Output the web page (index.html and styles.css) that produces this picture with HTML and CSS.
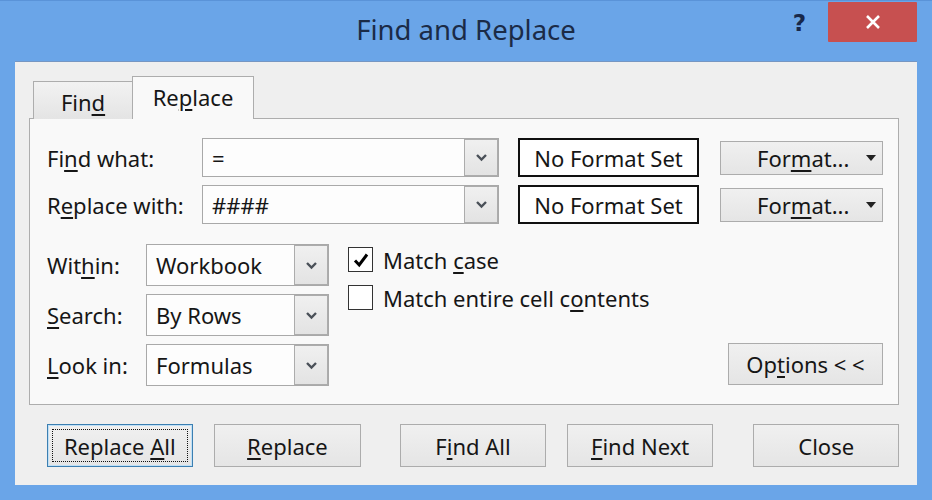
FILE: index.html
```html
<!DOCTYPE html>
<html>
<head>
<meta charset="utf-8">
<link rel="stylesheet" href="styles.css">
</head>
<body>
<div class="window">
  <div class="titlebar">
    <div class="title">Find and Replace</div>
    <div class="controls">
      <span class="help">?</span>
      <div class="close-btn">
        <svg width="16" height="16" viewBox="0 0 16 16"><path d="M2 2 L14 14 M14 2 L2 14" stroke="#fff" stroke-width="2.6" fill="none"/></svg>
      </div>
    </div>
  </div>
  <div class="client">
    <div class="tabs">
      <div class="tab"><span>Fin<u>d</u></span></div>
      <div class="tab active"><span>Re<u>p</u>lace</span></div>
    </div>
    <div class="panel">
      <div class="row">
        <div class="label">Fi<u>n</u>d what:</div>
        <div class="combo wide">
          <span class="value">=</span>
          <span class="drop"><svg width="13" height="9" viewBox="0 0 13 9"><path d="M2 2 L6.5 6.5 L11 2" stroke="#4a5058" stroke-width="2.4" fill="none"/></svg></span>
        </div>
        <div class="nofmt">No Format Set</div>
        <div class="btn fmt"><span>For<u>m</u>at...</span><span class="caret"></span></div>
      </div>
      <div class="row">
        <div class="label">R<u>e</u>place with:</div>
        <div class="combo wide">
          <span class="value">####</span>
          <span class="drop"><svg width="13" height="9" viewBox="0 0 13 9"><path d="M2 2 L6.5 6.5 L11 2" stroke="#4a5058" stroke-width="2.4" fill="none"/></svg></span>
        </div>
        <div class="nofmt">No Format Set</div>
        <div class="btn fmt"><span>For<u>m</u>at...</span><span class="caret"></span></div>
      </div>
      <div class="lower">
        <div class="opts">
          <div class="label2">Wit<u>h</u>in:</div>
          <div class="combo small">
            <span class="value">Workbook</span>
            <span class="drop"><svg width="13" height="9" viewBox="0 0 13 9"><path d="M2 2 L6.5 6.5 L11 2" stroke="#4a5058" stroke-width="2.4" fill="none"/></svg></span>
          </div>
          <div class="label2"><u>S</u>earch:</div>
          <div class="combo small">
            <span class="value">By Rows</span>
            <span class="drop"><svg width="13" height="9" viewBox="0 0 13 9"><path d="M2 2 L6.5 6.5 L11 2" stroke="#4a5058" stroke-width="2.4" fill="none"/></svg></span>
          </div>
          <div class="label2"><u>L</u>ook in:</div>
          <div class="combo small">
            <span class="value">Formulas</span>
            <span class="drop"><svg width="13" height="9" viewBox="0 0 13 9"><path d="M2 2 L6.5 6.5 L11 2" stroke="#4a5058" stroke-width="2.4" fill="none"/></svg></span>
          </div>
        </div>
        <div class="checks">
          <div class="check">
            <span class="box"><svg width="20" height="20" viewBox="0 0 20 20"><path d="M4 10.5 L8.2 15 L16 4.5" stroke="#000" stroke-width="3" fill="none"/></svg></span>
            <span>Match <u>c</u>ase</span>
          </div>
          <div class="check">
            <span class="box"></span>
            <span>Match entire cell c<u>o</u>ntents</span>
          </div>
        </div>
        <div class="btn options"><span>Op<u>t</u>ions &lt; &lt;</span></div>
      </div>
    </div>
    <div class="actions">
      <div class="btn act default"><span class="focus"><span>Replace <u>A</u>ll</span></span></div>
      <div class="btn act w148 g21"><span><u>R</u>eplace</span></div>
      <div class="btn act g39"><span>F<u>i</u>nd All</span></div>
      <div class="btn act w147 g21"><span><u>F</u>ind Next</span></div>
      <div class="btn act g40"><span>Close</span></div>
    </div>
  </div>
</div>
</body>
</html>
```

FILE: styles.css
```css
* { box-sizing: border-box; }
html, body { margin: 0; padding: 0; }
body {
  width: 932px;
  height: 500px;
  overflow: hidden;
  font-family: "Segoe UI", "Noto Sans", sans-serif;
  font-size: 22px;
  color: #161616;
}
u { text-decoration-thickness: 2px; text-underline-offset: 3px; }

.window {
  width: 932px;
  height: 500px;
  background: #6aa5e8;
  border-top: 1px solid #5a93d8;
  display: flex;
  flex-direction: column;
}

.titlebar {
  height: 60px;
  display: grid;
  grid-template-columns: 1fr auto 1fr;
  align-items: start;
  padding: 0 15px;
}
.title {
  grid-column: 2;
  align-self: center;
  font-size: 27.5px;
  color: #1b2b47;
  line-height: 1;
  padding-bottom: 2px;
}
.controls {
  grid-column: 3;
  justify-self: end;
  display: flex;
  align-items: flex-start;
  margin-top: 1px;
}
.help {
  font-weight: bold;
  font-size: 23px;
  color: #18284a;
  line-height: 1;
  margin-top: 10px;
  margin-right: 22px;
  font-family: "DejaVu Sans", sans-serif;
}
.close-btn {
  width: 89px;
  height: 40px;
  background: #c75050;
  display: flex;
  align-items: center;
  justify-content: center;
  border-radius: 1px;
}

.client {
  margin: 0 15px 15px 15px;
  height: 424px;
  background: #efefef;
  border-top: 1px solid #7696c2;
  padding: 14px 18px 0 14px;
}

.tabs {
  display: flex;
  align-items: flex-end;
  margin-left: 4px;
  height: 43px;
  margin-bottom: -1px;
}
.tab {
  position: relative;
  z-index: 1;
  height: 38px;
  width: 100px;
  border: 1px solid #adadad;
  border-bottom: none;
  background: linear-gradient(#f2f2f2, #e4e4e4);
  display: flex;
  align-items: center;
  justify-content: center;
  padding-top: 2px;
}
.tab.active {
  width: 122px;
  height: 43px;
  background: #f9f9f9;
  margin-left: -1px;
  padding-top: 0;
  padding-bottom: 3px;
}

.panel {
  height: 287px;
  border: 1px solid #adadad;
  background: #f9f9f9;
  padding: 19px 15px 18px 17px;
}

.row {
  display: flex;
  align-items: center;
  height: 39px;
  margin-bottom: 8px;
}
.label {
  width: 155px;
}
.combo {
  display: flex;
  align-items: stretch;
  background: #fdfdfd;
  border: 1px solid #a9a9a9;
}
.combo.wide {
  width: 297px;
  height: 39px;
  margin-right: 19px;
}
.value {
  flex: 1;
  display: flex;
  align-items: center;
  padding-left: 9px;
}
.drop {
  width: 34px;
  border: 1px solid #acacac;
  background: linear-gradient(#f0f0f0, #e3e3e3);
  display: flex;
  align-items: center;
  justify-content: center;
}
.nofmt {
  width: 181px;
  height: 39px;
  border: 2px solid #101010;
  background: #fff;
  display: flex;
  align-items: center;
  justify-content: center;
  margin-right: 21px;
}
.btn {
  border: 1px solid #acacac;
  background: linear-gradient(#f0f0f0, #e5e5e5);
  display: flex;
  align-items: center;
  justify-content: center;
}
.fmt {
  width: 163px;
  height: 34px;
  justify-content: flex-start;
  padding-left: 36px;
  padding-right: 6px;
}
.caret {
  margin-left: auto;
  width: 0;
  height: 0;
  border-left: 5px solid transparent;
  border-right: 5px solid transparent;
  border-top: 6px solid #222;
}

.lower {
  display: flex;
  align-items: flex-start;
  margin-top: 20px;
}
.opts {
  display: grid;
  grid-template-columns: 99px 183px;
  row-gap: 8px;
  align-items: center;
}
.combo.small {
  height: 42px;
}
.checks {
  display: flex;
  flex-direction: column;
  gap: 13px;
  margin-left: 19px;
  padding-top: 3px;
}
.check {
  display: flex;
  align-items: center;
  height: 25px;
  gap: 10px;
}
.box {
  width: 25px;
  height: 25px;
  border: 1px solid #333;
  background: #fff;
  display: flex;
  align-items: center;
  justify-content: center;
}
.options {
  margin-left: auto;
  align-self: flex-end;
  width: 155px;
  height: 42px;
  margin-bottom: 1px;
}

.actions {
  display: flex;
  margin-top: 19px;
  padding-left: 18px;
}
.act {
  width: 146px;
  height: 43px;
}
.w148 { width: 148px; }
.w147 { width: 147px; }
.g21 { margin-left: 21px; }
.g39 { margin-left: 39px; }
.g40 { margin-left: 40px; }
.default {
  border: 1px solid #3c7fb1;
  box-shadow: inset 0 0 0 1px #bfe0f7;
  padding: 4px;
}
.focus {
  width: 100%;
  height: 100%;
  border: 1px dotted #111;
  display: flex;
  align-items: center;
  justify-content: center;
}
```
